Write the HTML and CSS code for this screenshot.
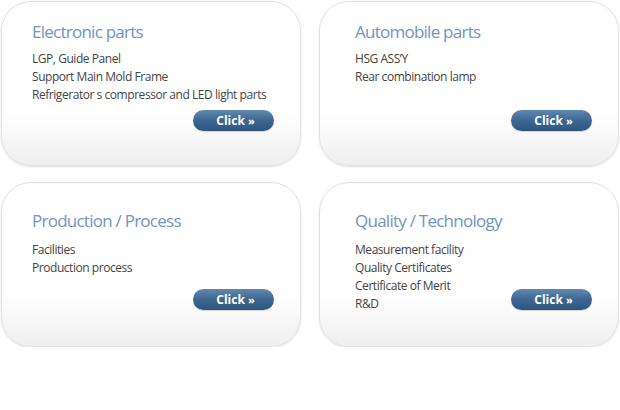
FILE: index.html
```html
<!DOCTYPE html>
<html>
<head>
<meta charset="utf-8">
<link rel="stylesheet" href="styles.css">
</head>
<body>
<div class="grid">
  <div class="card">
    <h2 class="title">Electronic parts</h2>
    <ul class="list">
      <li>LGP, Guide Panel</li>
      <li>Support Main Mold Frame</li>
      <li>Refrigerator s compressor and LED light parts</li>
    </ul>
    <a class="btn">Click <span class="arr">»</span></a>
  </div>
  <div class="card card-r">
    <h2 class="title">Automobile parts</h2>
    <ul class="list">
      <li>HSG ASS’Y</li>
      <li>Rear combination lamp</li>
    </ul>
    <a class="btn">Click <span class="arr">»</span></a>
  </div>
  <div class="card card-b">
    <h2 class="title">Production / Process</h2>
    <ul class="list">
      <li>Facilities</li>
      <li>Production process</li>
    </ul>
    <a class="btn">Click <span class="arr">»</span></a>
  </div>
  <div class="card card-r card-b">
    <h2 class="title">Quality / Technology</h2>
    <ul class="list">
      <li>Measurement facility</li>
      <li>Quality Certificates</li>
      <li>Certificate of Merit</li>
      <li>R&amp;D</li>
    </ul>
    <a class="btn">Click <span class="arr">»</span></a>
  </div>
</div>
</body>
</html>
```
FILE: styles.css
```css
html, body {
  margin: 0;
  padding: 0;
  background: #fff;
}
body {
  font-family: "Open Sans", "Noto Sans", sans-serif;
}
.grid {
  display: grid;
  grid-template-columns: 300px 300px;
  grid-template-rows: 165px 165px;
  column-gap: 18px;
  row-gap: 16px;
  padding: 1px 0 0 1px;
}
.card {
  position: relative;
  box-sizing: border-box;
  border: 1px solid #e2e2e2;
  border-radius: 30px;
  background: linear-gradient(to bottom, #ffffff 0%, #ffffff 68%, #efefef 100%);
  box-shadow: 0 1px 2px rgba(0,0,0,0.12);
  padding: 18px 0 0 30px;
}
.card-r {
  padding-left: 35px;
}
.card-b {
  padding-top: 26px;
}
.title {
  margin: 0;
  font-size: 17px;
  font-weight: normal;
  color: #7393c2;
  letter-spacing: -0.75px;
  line-height: 24px;
}
.list {
  list-style: none;
  margin: 6px 0 0 0;
  padding: 0;
  font-size: 12px;
  line-height: 18px;
  color: #444;
  letter-spacing: -0.45px;
}
.card-b .list {
  margin-top: 8px;
}
.btn {
  position: absolute;
  right: 26px;
  top: 108px;
  width: 81px;
  height: 21px;
  border-radius: 11px;
  background: linear-gradient(to bottom, #6089b0 0%, #3d6790 50%, #2c5680 100%);
  color: #fff;
  font-weight: bold;
  font-size: 12px;
  line-height: 21px;
  text-align: center;
  text-indent: 4px;
  box-shadow: 0 1px 1px rgba(0,0,0,0.15);
}
.card-b .btn {
  top: 106px;
}
.arr {
  font-size: 11px;
}
```
